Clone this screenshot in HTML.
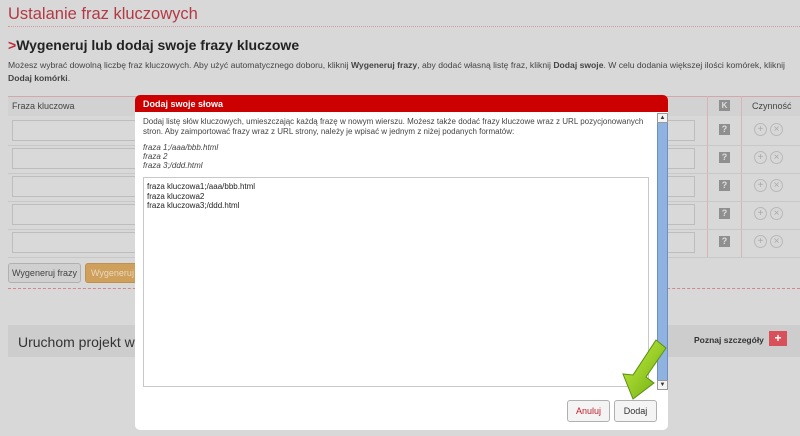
<!DOCTYPE html>
<html><head><style>
*{margin:0;padding:0;box-sizing:border-box}
body{width:800px;height:436px;background:#d8d8d8;font-family:"Liberation Sans",sans-serif;position:relative;overflow:hidden;color:#333}
.a{position:absolute;white-space:nowrap}
.inp{position:absolute;left:12px;width:683px;height:21px;border:1px solid #bdbdbd;background:#d9d9d9}
.hl{position:absolute;left:8px;width:792px;height:1px;background:#c8c8c8}
.q{position:absolute;left:719px;width:11px;height:11px;background:#8f8f8f;color:#ddd;font-size:9px;font-weight:bold;text-align:center;line-height:11px}
.c{position:absolute;width:13px;height:13px;border:1px solid #b8b8b8;border-radius:50%;color:#aaa;font-size:10px;text-align:center;line-height:11px}
.btn{position:absolute;border:1px solid #b0b0b0;border-radius:3px;font-size:9px;text-align:center;white-space:nowrap;overflow:hidden}
</style></head><body>
<div class="a" style="left:8px;top:5px;font-size:16.5px;color:#b23a45">Ustalanie fraz kluczowych</div>
<div class="a" style="left:8px;top:26px;width:792px;border-top:1px dotted #d09aa0"></div>
<div class="a" style="left:8px;top:37px;font-size:14px;font-weight:bold;color:#222"><span style="color:#c02a35">&gt;</span>Wygeneruj lub dodaj swoje frazy kluczowe</div>
<div class="a" style="left:8px;top:59px;width:790px;font-size:8.6px;line-height:13px;color:#444;white-space:normal">Możesz wybrać dowolną liczbę fraz kluczowych. Aby użyć automatycznego doboru, kliknij <b>Wygeneruj frazy</b>, aby dodać własną listę fraz, kliknij <b>Dodaj swoje</b>. W celu dodania większej ilości komórek, kliknij <b>Dodaj komórki</b>.</div>
<div class="a" style="left:8px;top:96px;width:792px;height:20px;background:#d2d2d2;border-top:1px solid #d3a8ac"></div>
<div class="a" style="left:12px;top:101px;font-size:9px;color:#444">Fraza kluczowa</div>
<div class="a" style="left:719px;top:100px;width:11px;height:11px;background:#8f8f8f;color:#ddd;font-size:8px;font-weight:bold;text-align:center;line-height:11px">K</div>
<div class="a" style="left:752px;top:101px;font-size:9px;color:#444">Czynność</div>
<div class="a" style="left:707px;top:96px;width:1px;height:162px;background:#d6b4b8"></div>
<div class="a" style="left:741px;top:96px;width:1px;height:162px;background:#d6b4b8"></div>
<div class="inp" style="top:120px"></div><div class="inp" style="top:148px"></div><div class="inp" style="top:176px"></div><div class="inp" style="top:204px"></div><div class="inp" style="top:232px"></div>
<div class="hl" style="top:145px"></div><div class="hl" style="top:173px"></div><div class="hl" style="top:201px"></div><div class="hl" style="top:229px"></div><div class="hl" style="top:257px"></div>
<div class="q" style="top:124px">?</div><div class="q" style="top:152px">?</div><div class="q" style="top:180px">?</div><div class="q" style="top:208px">?</div><div class="q" style="top:236px">?</div>
<div class="c" style="left:754px;top:123px">+</div><div class="c" style="left:770px;top:123px">×</div>
<div class="c" style="left:754px;top:151px">+</div><div class="c" style="left:770px;top:151px">×</div>
<div class="c" style="left:754px;top:179px">+</div><div class="c" style="left:770px;top:179px">×</div>
<div class="c" style="left:754px;top:207px">+</div><div class="c" style="left:770px;top:207px">×</div>
<div class="c" style="left:754px;top:235px">+</div><div class="c" style="left:770px;top:235px">×</div>
<div class="btn" style="left:8px;top:263px;width:73px;height:20px;line-height:18px;background:#d0d0d0;color:#444">Wygeneruj frazy</div>
<div class="btn" style="left:85px;top:263px;width:60px;height:20px;line-height:18px;background:#cf9f5c;border-color:#c09050;color:#ead9bf;text-align:left;padding-left:5px">Wygeneruj f</div>
<div class="a" style="left:8px;top:288px;width:792px;border-top:1px dashed #d08890"></div>
<div class="a" style="left:8px;top:325px;width:792px;height:32px;background:#cdcdcd"></div>
<div class="a" style="left:18px;top:334px;font-size:14px;color:#333">Uruchom projekt w 3</div>
<div class="a" style="left:694px;top:335px;font-size:8.5px;font-weight:bold;color:#333">Poznaj szczegóły</div>
<div class="a" style="left:769px;top:331px;width:18px;height:15px;background:#d8505a;color:#fff;font-size:12px;font-weight:bold;text-align:center;line-height:15px">+</div>

<div class="a" style="left:135px;top:95px;width:533px;height:335px;background:#fff;border-radius:5px"></div>
<div class="a" style="left:135px;top:95px;width:533px;height:17px;background:#cc0000;border-radius:5px 5px 0 0"></div>
<div class="a" style="left:143px;top:99px;font-size:9px;font-weight:bold;color:#fff">Dodaj swoje słowa</div>
<div class="a" style="left:143px;top:117px;width:510px;font-size:8px;line-height:10px;color:#444;white-space:normal">Dodaj listę słów kluczowych, umieszczając każdą frazę w nowym wierszu. Możesz także dodać frazy kluczowe wraz z URL pozycjonowanych stron. Aby zaimportować frazy wraz z URL strony, należy je wpisać w jednym z niżej podanych formatów:</div>
<div class="a" style="left:143px;top:143px;font-size:8px;line-height:9px;font-style:italic;color:#444">fraza 1;/aaa/bbb.html<br>fraza 2<br>fraza 3;/ddd.html</div>
<div class="a" style="left:143px;top:177px;width:506px;height:210px;border:1px solid #c8c8c8"></div>
<div class="a" style="left:147px;top:182px;font-size:8px;line-height:9.5px;color:#222">fraza kluczowa1;/aaa/bbb.html<br>fraza kluczowa2<br>fraza kluczowa3;/ddd.html</div>
<div class="a" style="left:657px;top:113px;width:11px;height:277px;background:#8fb2e0;border:1px solid #6d90c0"></div>
<div class="a" style="left:657px;top:113px;width:11px;height:10px;background:#f4f4f4;border:1px solid #999;font-size:6px;text-align:center;line-height:8px">▲</div>
<div class="a" style="left:657px;top:380px;width:11px;height:10px;background:#f4f4f4;border:1px solid #999;font-size:6px;text-align:center;line-height:8px">▼</div>
<div class="btn" style="left:567px;top:400px;width:43px;height:22px;line-height:20px;background:#f4f4f4;color:#c0202a">Anuluj</div>
<div class="btn" style="left:614px;top:400px;width:43px;height:22px;line-height:20px;background:#f4f4f4;color:#333">Dodaj</div>
<svg class="a" style="left:620px;top:335px" width="50" height="70" viewBox="0 0 50 70">
<defs><linearGradient id="g" x1="0" y1="0" x2="1" y2="1"><stop offset="0" stop-color="#c8f040"/><stop offset="1" stop-color="#6aaa10"/></linearGradient></defs>
<polygon points="36,5 46,13 26,42 34,48 13,64 3,39 13,40" fill="url(#g)" stroke="#5a9010" stroke-width="1"/>
</svg>
</body></html>
